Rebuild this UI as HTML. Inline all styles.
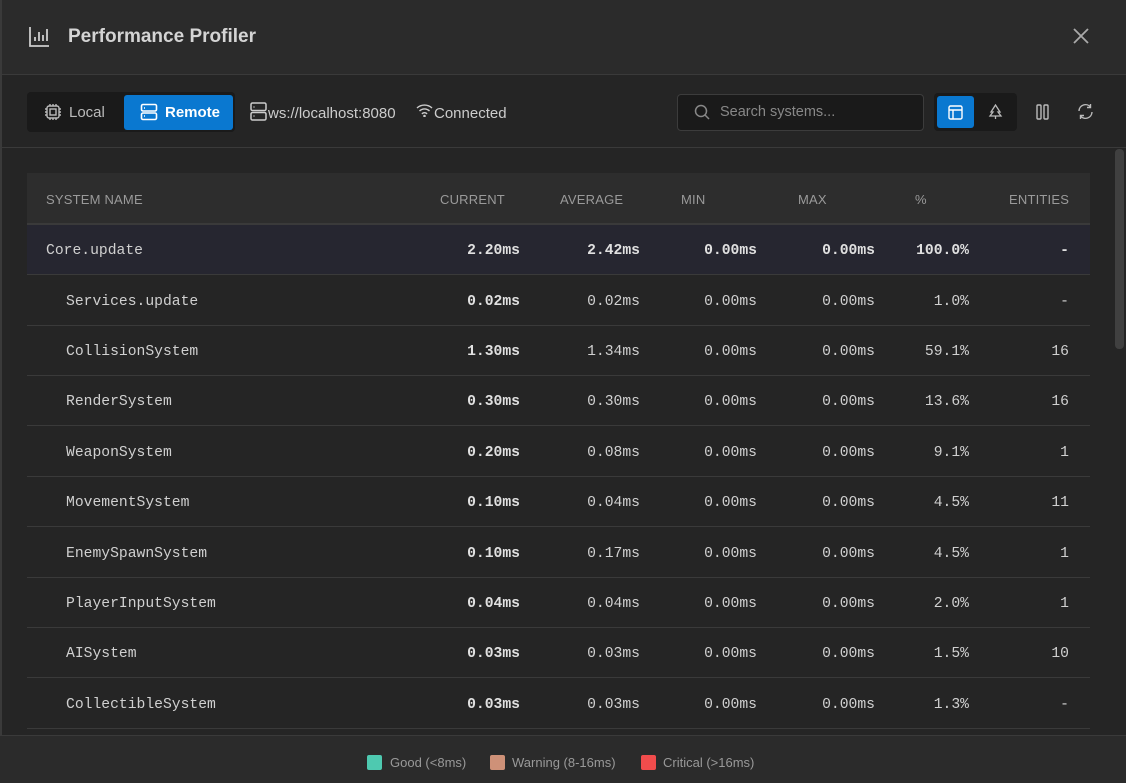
<!DOCTYPE html>
<html><head><meta charset="utf-8"><style>
*{box-sizing:border-box;margin:0;padding:0}
body{width:1126px;height:783px;background:#252525;font-family:"Liberation Sans",sans-serif;position:relative;overflow:hidden;color:#ccc}
.abs{position:absolute}
.hdr{left:0;top:0;width:1126px;height:75px;background:#2b2b2b;border-bottom:1px solid #3a3a3a;border-left:2px solid #3a3a3a}
.tb{left:0;top:75px;width:1126px;height:73px;background:#252525;border-bottom:1px solid #3a3a3a;border-left:2px solid #3a3a3a}
.main{left:0;top:148px;width:1126px;height:588px;border-left:2px solid #3a3a3a}
.foot{left:0;top:735px;width:1126px;height:48px;background:#2b2b2b;border-top:1px solid #3a3a3a}
.th{left:27px;top:173px;width:1063px;height:52px;background:#2d2d2d;border-bottom:2px solid #3a3a3a}
.th span{position:absolute;top:19px;font-size:13px;color:#9a9a9a;letter-spacing:.2px}
.row{left:27px;width:1063px;height:50px;border-bottom:1px solid #3a3a3a;font-family:"Liberation Mono",monospace;font-size:14.7px;color:#d0d0d0}
.row span{position:absolute;top:18px}
.b{font-weight:bold;color:#e0e0e0}
</style></head><body>
<div class="abs hdr">
<svg class="abs" style="left:26px;top:26px" width="22" height="22" viewBox="0 0 22 22" fill="none" stroke="#ccc" stroke-width="1.8"><path d="M2 1v19h19M7 15v-4M11 15V6M15 15v-6M19 15V3"/></svg>
<div class="abs" style="left:66px;top:26px;font-size:19px;font-weight:bold;color:#d4d4d4">Performance Profiler</div>
<svg class="abs" style="left:1071px;top:28px" width="16" height="16" viewBox="0 0 16 16" stroke="#aaa" stroke-width="1.8"><path d="M1 1l14 14M15 1L1 15"/></svg>
</div>
<div class="abs tb">
<div class="abs" style="left:25px;top:17px;width:208px;height:40px;background:#1a1a1a;border-radius:4px"></div>
<svg class="abs" style="left:42px;top:28px" width="18" height="18" viewBox="0 0 18 18" fill="none" stroke="#bbb" stroke-width="1.4"><rect x="3" y="3" width="12" height="12" rx="2"/><rect x="6" y="6" width="6" height="6"/><path d="M6 1v2M9 1v2M12 1v2M6 15v2M9 15v2M12 15v2M1 6h2M1 9h2M1 12h2M15 6h2M15 9h2M15 12h2"/></svg>
<div class="abs" style="left:67px;top:29px;font-size:15px;color:#bbb">Local</div>
<div class="abs" style="left:122px;top:20px;width:109px;height:35px;background:#0a78d0;border-radius:3px"></div>
<svg class="abs" style="left:138px;top:28px" width="18" height="18" viewBox="0 0 18 18" fill="none" stroke="#fff" stroke-width="1.6"><rect x="1.5" y="1.5" width="15" height="6.5" rx="1.5"/><rect x="1.5" y="10" width="15" height="6.5" rx="1.5"/><path d="M4 5h1M4 13h1"/></svg>
<div class="abs" style="left:163px;top:29px;font-size:15px;font-weight:bold;color:#fff">Remote</div>
<svg class="abs" style="left:248px;top:27px" width="18" height="19" viewBox="0 0 18 19" fill="none" stroke="#ccc" stroke-width="1.5"><rect x="1" y="1" width="15" height="7.5" rx="1.5"/><rect x="1" y="10.5" width="15" height="7.5" rx="1.5"/><path d="M3.5 5h1M3.5 14h1"/></svg>
<div class="abs" style="left:266px;top:30px;font-size:15px;color:#ccc">ws://localhost:8080</div>
<svg class="abs" style="left:414px;top:28px" width="17" height="14" viewBox="0 0 17 14" fill="none" stroke="#ccc" stroke-width="1.4"><path d="M1 5a11 11 0 0 1 15 0M3.5 8a7 7 0 0 1 10 0M6 11a3 3 0 0 1 5 0"/><circle cx="8.5" cy="13" r=".6" fill="#ccc"/></svg>
<div class="abs" style="left:432px;top:30px;font-size:15px;color:#ccc">Connected</div>
<div class="abs" style="left:675px;top:19px;width:247px;height:37px;background:#1a1a1a;border:1px solid #3c3c3c;border-radius:4px"></div>
<svg class="abs" style="left:692px;top:29px" width="16" height="16" viewBox="0 0 16 16" fill="none" stroke="#888" stroke-width="1.5"><circle cx="7" cy="7" r="5.5"/><path d="M11 11l4 4"/></svg>
<div class="abs" style="left:718px;top:29px;font-size:14.5px;color:#888">Search systems...</div>
<div class="abs" style="left:932px;top:18px;width:83px;height:38px;background:#1a1a1a;border-radius:4px"></div>
<div class="abs" style="left:935px;top:21px;width:37px;height:32px;background:#0a78d0;border-radius:3px"></div>
<svg class="abs" style="left:946px;top:30px" width="15" height="15" viewBox="0 0 15 15" fill="none" stroke="#fff" stroke-width="1.4"><rect x="1" y="1" width="13" height="13" rx="1.5"/><path d="M1 5h13M5 5v9"/></svg>
<svg class="abs" style="left:986px;top:29px" width="15" height="16" viewBox="0 0 15 16" fill="none" stroke="#bbb" stroke-width="1.3"><path d="M7.5 1L3 8h2L2 12h11l-3-4h2z M7.5 12v3"/></svg>
<svg class="abs" style="left:1034px;top:29px" width="13" height="16" viewBox="0 0 13 16" fill="none" stroke="#bbb" stroke-width="1.4"><rect x="1" y="1" width="4" height="14" rx="1"/><rect x="8" y="1" width="4" height="14" rx="1"/></svg>
<svg class="abs" style="left:1075px;top:28px" width="17" height="17" viewBox="0 0 17 17" fill="none" stroke="#bbb" stroke-width="1.4"><path d="M2 8a6.5 6.5 0 0 1 11.5-4M15 9a6.5 6.5 0 0 1-11.5 4M13.5 1v3.5H10M3.5 16v-3.5H7"/></svg>
</div>
<div class="abs main"></div>
<div class="abs" style="left:1115px;top:149px;width:9px;height:200px;background:#404040;border-radius:4px"></div>
<div class="abs th">
<span style="left:19px">SYSTEM NAME</span><span style="left:413px">CURRENT</span><span style="left:533px">AVERAGE</span><span style="left:654px">MIN</span><span style="left:771px">MAX</span><span style="left:888px">%</span><span style="left:982px">ENTITIES</span>
</div>
<div class="abs foot">
<div class="abs" style="left:367px;top:19px;width:15px;height:15px;background:#4ec9b0;border-radius:2px"></div>
<div class="abs" style="left:390px;top:19px;font-size:13px;color:#999">Good (&lt;8ms)</div>
<div class="abs" style="left:490px;top:19px;width:15px;height:15px;background:#ce9178;border-radius:2px"></div>
<div class="abs" style="left:512px;top:19px;font-size:13px;color:#999">Warning (8-16ms)</div>
<div class="abs" style="left:641px;top:19px;width:15px;height:15px;background:#f14c4c;border-radius:2px"></div>
<div class="abs" style="left:663px;top:19px;font-size:13px;color:#999">Critical (&gt;16ms)</div>
</div>
<div class="abs row" style="top:225px;background:#262630"><span style="left:19px">Core.update</span><span class="b" style="right:570px">2.20ms</span><span class="b" style="right:450px">2.42ms</span><span class="b" style="right:333px">0.00ms</span><span class="b" style="right:215px">0.00ms</span><span class="b" style="right:121px">100.0%</span><span class="b" style="right:21px">-</span></div>
<div class="abs row" style="top:276px"><span style="left:39px">Services.update</span><span class="b" style="right:570px">0.02ms</span><span style="right:450px">0.02ms</span><span style="right:333px">0.00ms</span><span style="right:215px">0.00ms</span><span style="right:121px">1.0%</span><span style="right:21px">-</span></div>
<div class="abs row" style="top:326px"><span style="left:39px">CollisionSystem</span><span class="b" style="right:570px">1.30ms</span><span style="right:450px">1.34ms</span><span style="right:333px">0.00ms</span><span style="right:215px">0.00ms</span><span style="right:121px">59.1%</span><span style="right:21px">16</span></div>
<div class="abs row" style="top:376px"><span style="left:39px">RenderSystem</span><span class="b" style="right:570px">0.30ms</span><span style="right:450px">0.30ms</span><span style="right:333px">0.00ms</span><span style="right:215px">0.00ms</span><span style="right:121px">13.6%</span><span style="right:21px">16</span></div>
<div class="abs row" style="top:427px"><span style="left:39px">WeaponSystem</span><span class="b" style="right:570px">0.20ms</span><span style="right:450px">0.08ms</span><span style="right:333px">0.00ms</span><span style="right:215px">0.00ms</span><span style="right:121px">9.1%</span><span style="right:21px">1</span></div>
<div class="abs row" style="top:477px"><span style="left:39px">MovementSystem</span><span class="b" style="right:570px">0.10ms</span><span style="right:450px">0.04ms</span><span style="right:333px">0.00ms</span><span style="right:215px">0.00ms</span><span style="right:121px">4.5%</span><span style="right:21px">11</span></div>
<div class="abs row" style="top:528px"><span style="left:39px">EnemySpawnSystem</span><span class="b" style="right:570px">0.10ms</span><span style="right:450px">0.17ms</span><span style="right:333px">0.00ms</span><span style="right:215px">0.00ms</span><span style="right:121px">4.5%</span><span style="right:21px">1</span></div>
<div class="abs row" style="top:578px"><span style="left:39px">PlayerInputSystem</span><span class="b" style="right:570px">0.04ms</span><span style="right:450px">0.04ms</span><span style="right:333px">0.00ms</span><span style="right:215px">0.00ms</span><span style="right:121px">2.0%</span><span style="right:21px">1</span></div>
<div class="abs row" style="top:628px"><span style="left:39px">AISystem</span><span class="b" style="right:570px">0.03ms</span><span style="right:450px">0.03ms</span><span style="right:333px">0.00ms</span><span style="right:215px">0.00ms</span><span style="right:121px">1.5%</span><span style="right:21px">10</span></div>
<div class="abs row" style="top:679px"><span style="left:39px">CollectibleSystem</span><span class="b" style="right:570px">0.03ms</span><span style="right:450px">0.03ms</span><span style="right:333px">0.00ms</span><span style="right:215px">0.00ms</span><span style="right:121px">1.3%</span><span style="right:21px">-</span></div>
</body></html>
